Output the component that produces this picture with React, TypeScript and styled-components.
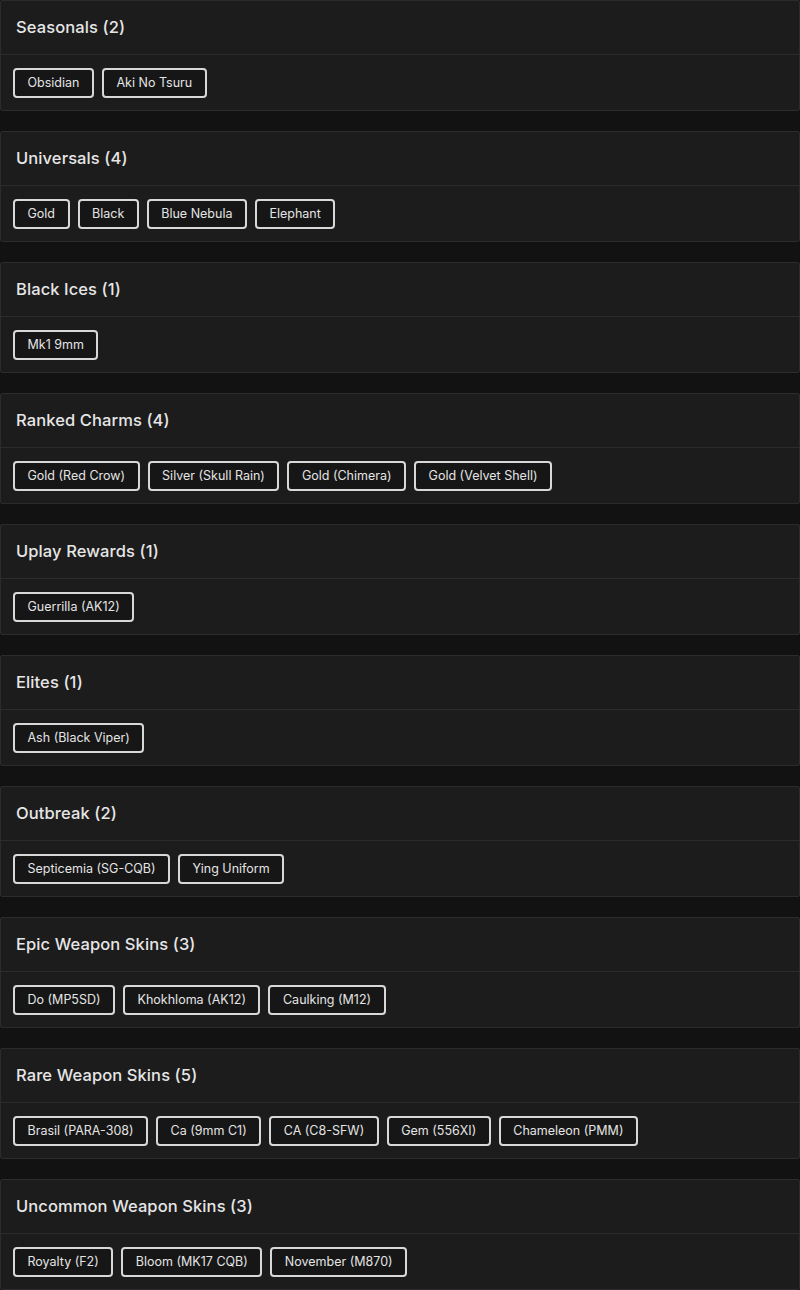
import React from "react";
import styled, { createGlobalStyle } from "styled-components";

const GlobalStyle = createGlobalStyle`
  html, body {
    margin: 0;
    padding: 0;
    background: #121212;
  }
  body {
    font-family: Inter, "Noto Sans", sans-serif;
    color: #e2e2e2;
  }
`;

const Page = styled.div`
  display: flex;
  flex-direction: column;
  gap: 20px;
  width: 800px;
`;

const Card = styled.section`
  display: flex;
  flex-direction: column;
  background: #1c1c1c;
  border: 1px solid #2c2c2c;
  border-radius: 2px;
`;

const Header = styled.header`
  height: 54px;
  box-sizing: border-box;
  display: flex;
  align-items: center;
  padding: 0 15px 2px;
  border-bottom: 1px solid #2c2c2c;
  font-size: 16.5px;
  font-weight: 500;
  color: #e6e6e6;
  letter-spacing: 0.1px;
`;

const Body = styled.div`
  display: flex;
  flex-wrap: wrap;
  gap: 8px;
  padding: 12px;
  height: 55px;
  box-sizing: border-box;
  align-items: center;
`;

const Tag = styled.span`
  display: inline-flex;
  align-items: center;
  height: 30px;
  box-sizing: border-box;
  padding: 0 12.5px;
  border: 2px solid #d8d8d8;
  border-radius: 4px;
  background: #161616;
  font-size: 12.5px;
  color: #e4e4e4;
  white-space: nowrap;
`;

const sections: { title: string; items: string[] }[] = [
  { title: "Seasonals", items: ["Obsidian", "Aki No Tsuru"] },
  { title: "Universals", items: ["Gold", "Black", "Blue Nebula", "Elephant"] },
  { title: "Black Ices", items: ["Mk1 9mm"] },
  {
    title: "Ranked Charms",
    items: ["Gold (Red Crow)", "Silver (Skull Rain)", "Gold (Chimera)", "Gold (Velvet Shell)"],
  },
  { title: "Uplay Rewards", items: ["Guerrilla (AK12)"] },
  { title: "Elites", items: ["Ash (Black Viper)"] },
  { title: "Outbreak", items: ["Septicemia (SG-CQB)", "Ying Uniform"] },
  { title: "Epic Weapon Skins", items: ["Do (MP5SD)", "Khokhloma (AK12)", "Caulking (M12)"] },
  {
    title: "Rare Weapon Skins",
    items: ["Brasil (PARA-308)", "Ca (9mm C1)", "CA (C8-SFW)", "Gem (556XI)", "Chameleon (PMM)"],
  },
  { title: "Uncommon Weapon Skins", items: ["Royalty (F2)", "Bloom (MK17 CQB)", "November (M870)"] },
];

export default function App() {
  return (
    <>
      <GlobalStyle />
      <Page>
        {sections.map((s) => (
          <Card key={s.title}>
            <Header>
              {s.title} ({s.items.length})
            </Header>
            <Body>
              {s.items.map((it) => (
                <Tag key={it}>{it}</Tag>
              ))}
            </Body>
          </Card>
        ))}
      </Page>
    </>
  );
}
